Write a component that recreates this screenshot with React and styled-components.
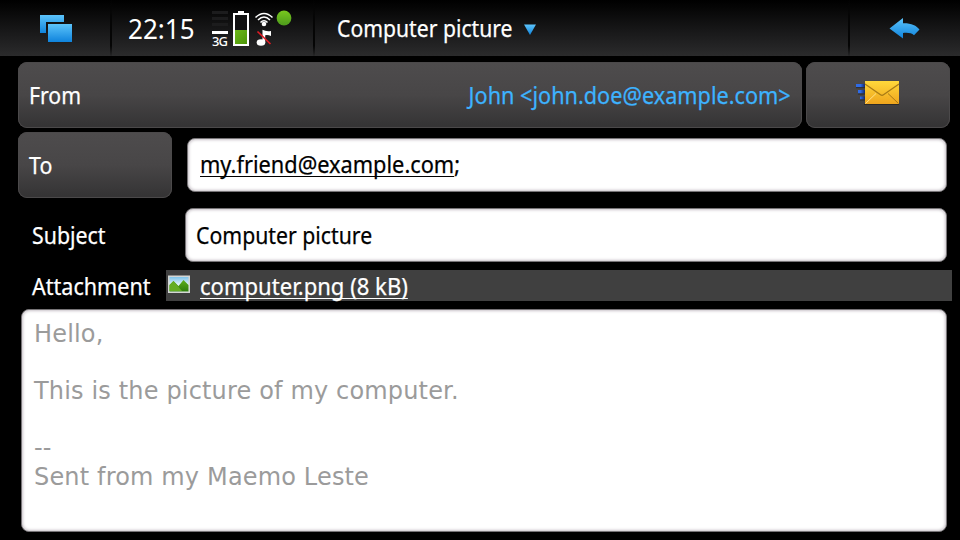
import React from 'react';
import styled, { createGlobalStyle } from 'styled-components';

const Global = createGlobalStyle`
  * { box-sizing: border-box; }
  body { margin: 0; background: #000; }
`;

const Screen = styled.div`
  width: 960px;
  height: 540px;
  overflow: hidden;
  background: #000;
  color: #fff;
  font-family: "Noto Sans", "Open Sans", sans-serif;
  font-size: 24px;
  line-height: 32px;
`;

const StatusBar = styled.header`
  display: flex;
  height: 56px;
  background: linear-gradient(#000 0%, #060606 15%, #19191a 58%, #2b2b2c 100%);
`;

const Segment = styled.div`
  display: flex;
  flex: ${(p) => (p.$width ? `0 0 ${p.$width}px` : '1')};
  height: 56px;
  padding-left: ${(p) => p.$pad}px;
  border-right: ${(p) => (p.$last ? '0' : '2px solid')};
  border-image: linear-gradient(transparent, #050505 30%, #050505 80%, transparent) 1;
`;

const Text = styled.span`
  display: block;
  flex: none;
  width: max-content;
  white-space: pre;
  color: ${(p) => p.$color || 'inherit'};
  -webkit-text-stroke: 0.25px currentColor;
  transform: scaleX(${(p) => p.$k || 1});
  transform-origin: ${(p) => p.$origin || 'left'} center;
`;

const Link = styled.span`
  text-decoration: underline;
  text-decoration-thickness: 1px;
  text-underline-offset: 3px;
  text-decoration-skip-ink: none;
`;

const Title = styled(Text)`
  width: 175px;
  margin-top: 12px;
`;

const Clock = styled(Text)`
  width: 66px;
  margin-top: 13px;
  font-size: 27px;
  -webkit-text-stroke: 0;
`;

const FileName = styled(Text)`
  margin-left: 9px;
`;

const Icon = styled.svg`
  display: block;
  flex: none;
  margin-top: ${(p) => p.$top || 0}px;
  margin-left: ${(p) => p.$left || 0}px;
`;

const StatusIcons = styled.div`
  display: flex;
  margin-left: auto;
  width: 102px;
`;

const Form = styled.main`
  display: flex;
  flex-direction: column;
  padding: 6px 8px 0 18px;
`;

const Row = styled.div`
  display: flex;
  height: ${(p) => p.$height}px;
  margin-bottom: ${(p) => p.$gap}px;
`;

const Button = styled.div`
  display: flex;
  justify-content: space-between;
  width: ${(p) => p.$width}px;
  height: 66px;
  margin-right: ${(p) => p.$gap || 0}px;
  padding: 17px 11px 0;
  border-radius: 9px;
  background: linear-gradient(#4e4c4d, #484647 50%, #353435 96%);
  box-shadow: inset 0 0 0 1px #4b494a;
`;

const Label = styled.div`
  flex: none;
  width: ${(p) => p.$width}px;
  padding: ${(p) => p.$top}px 0 0 14px;
`;

const Field = styled.div`
  width: ${(p) => p.$width}px;
  height: 54px;
  margin-top: ${(p) => p.$top || 0}px;
  padding: ${(p) => p.$padTop}px 0 0 ${(p) => p.$pad}px;
  border: 1px solid #777477;
  border-radius: 8px;
  background: #fff;
  color: #000;
  box-shadow: inset 0 0 3px 1px #c8c2c8;
`;

const AttachmentBar = styled.div`
  display: flex;
  width: 786px;
  flex: none;
  background: #404040;
`;

const Body = styled.div`
  width: 926px;
  height: 223px;
  margin-left: 3px;
  padding: 10px 12px;
  border: 1px solid #777477;
  border-radius: 8px;
  background: #fff;
  color: #9b9b9b;
  font-family: "DejaVu Sans", sans-serif;
  font-size: 24px;
  letter-spacing: 0.16px;
  line-height: 28.5px;
  white-space: pre-line;
  box-shadow: inset 0 0 3px 1px #c8c2c8;
`;

const BlueGradient = ({ id }) => (
  <linearGradient id={id} x1="0" y1="0" x2="0" y2="1">
    <stop offset="0" stopColor="#5cc4fb" />
    <stop offset="1" stopColor="#0f83dc" />
  </linearGradient>
);

const WindowsIcon = () => (
  <Icon width="34" height="29" $top={14} $left={39}>
    <defs><BlueGradient id="win" /></defs>
    <path d="M1 1h24v7H7v11H1z" fill="url(#win)" />
    <path d="M9 10h24v18H9z" fill="url(#win)" />
  </Icon>
);

const SignalIcon = () => (
  <Icon width="18" height="44" $top={8}>
    <g fill="#1c1c1d">
      <path d="M1 3h16v3H1zM1 9h16v3H1zM1 15h16v3H1z" />
    </g>
    <path d="M1 23h16v3H1z" fill="#fff" />
    <text x="1" y="38" fill="#fff" fontFamily="Noto Sans, sans-serif" fontSize="13" fontWeight="500" textLength="16" lengthAdjust="spacing">3G</text>
  </Icon>
);

const BatteryIcon = () => (
  <Icon width="18" height="37" $top={10} $left={3}>
    <defs>
      <linearGradient id="bat" x1="0" y1="0" x2="1" y2="1">
        <stop offset="0" stopColor="#6db81b" />
        <stop offset="1" stopColor="#4c9508" />
      </linearGradient>
    </defs>
    <path d="M6 1h6v2h5v33H1V3h5z" fill="#fff" />
    <path d="M3 5h12v29H3z" fill="#111" />
    <path d="M3 20h12v14H3z" fill="url(#bat)" />
  </Icon>
);

const WifiMusicIcon = () => (
  <Icon width="20" height="36" $top={11} $left={4}>
    <g fill="none" stroke="#fff" strokeWidth="1.600">
      <path d="M1.500 6.500Q10 -1.500 18.500 6.500M4 9Q10 3 16 9M6.500 11.500Q10 8 13.500 11.500" />
    </g>
    <circle cx="10" cy="13" r="2.300" fill="#fff" />
    <path d="M8.500 18.800q3.500 2 8.500 1.200v5q-3-1.400-5.800-.8V31.500H8.500z" fill="#fff" />
    <ellipse cx="7" cy="31.500" rx="4.300" ry="3.300" fill="#fff" />
    <path d="M3.500 20.500l13 12.500" stroke="#e01b24" strokeWidth="1.700" />
  </Icon>
);

const OnlineIcon = () => (
  <Icon width="16" height="16" $top={10} $left={2}>
    <defs>
      <linearGradient id="dot" x1="0" y1="0" x2="0" y2="1">
        <stop offset="0" stopColor="#78c81e" />
        <stop offset="1" stopColor="#4d9b1c" />
      </linearGradient>
    </defs>
    <circle cx="8" cy="8" r="7.400" fill="url(#dot)" />
  </Icon>
);

const MenuArrow = () => (
  <Icon width="14" height="12" $top={24} $left={11}>
    <defs><BlueGradient id="tri" /></defs>
    <path d="M1 .5h12l-6 10.500z" fill="url(#tri)" />
  </Icon>
);

const BackIcon = () => (
  <Icon width="32" height="24" $top={17} $left={38}>
    <defs><BlueGradient id="back" /></defs>
    <path d="M1.500 11.500L15 1V6.200C23 6 28.500 8.500 31.500 12.500L26 18.200C23.500 16 20 15.500 15 16V21.500z" fill="url(#back)" />
  </Icon>
);

const SendIcon = () => (
  <Icon width="46" height="28" $top={0} $left={38}>
    <defs>
      <linearGradient id="env" x1="0" y1="0" x2="0" y2="1">
        <stop offset="0" stopColor="#ffd83b" />
        <stop offset="1" stopColor="#efa51d" />
      </linearGradient>
      <linearGradient id="dash" gradientUnits="userSpaceOnUse" x1="1" y1="0" x2="10" y2="0">
        <stop offset="0" stopColor="#2f6be6" />
        <stop offset=".5" stopColor="#2f6be6" />
        <stop offset="1" stopColor="#10276f" />
      </linearGradient>
    </defs>
    <path d="M9 25.500h35" stroke="#2b2a2b" strokeWidth="1" />
    <path d="M1 5h9v3.200H1zM3 11h7v3.500H3zM5 17.500h5v3H5z" fill="url(#dash)" />
    <path d="M1 8.700h9M3 15h7M5 21h5" stroke="#2b2a2b" />
    <path d="M10 2h34v23H10z" fill="url(#env)" />
    <path d="M10.500 24.500L21 14.500" stroke="#ffe28a" strokeWidth="1" />
    <path d="M43.500 24.500L33 14.500" stroke="#a77818" strokeWidth="1" />
    <path d="M10 5L25.500 15.800Q27 16.800 28.500 15.800L44 5" fill="none" stroke="#a87b16" strokeWidth="1.300" />
  </Icon>
);

const PictureIcon = () => (
  <Icon width="23" height="20" $top={5} $left={2}>
    <defs>
      <linearGradient id="sky" x1="0" y1="0" x2="0" y2="1">
        <stop offset="0" stopColor="#7fc4ea" />
        <stop offset=".6" stopColor="#eef8fc" />
      </linearGradient>
      <linearGradient id="hill" x1="0" y1="0" x2="0" y2="1">
        <stop offset="0" stopColor="#5eaf1c" />
        <stop offset="1" stopColor="#2f7d0c" />
      </linearGradient>
    </defs>
    <path d="M0 .500h22v17.500H0z" fill="#d4d6d4" />
    <path d="M1.500 2h19v14.500h-19z" fill="url(#sky)" />
    <path d="M1.500 10l4-4 5 5 5-6 5 5v6.500h-19z" fill="url(#hill)" />
    <path d="M1.500 10l4-4L14 16H1.500z" fill="#64ad22" />
  </Icon>
);

const message = `Hello,

This is the picture of my computer.

--
Sent from my Maemo Leste`;

export default function App() {
  return (
    <Screen>
      <Global />
      <StatusBar>
        <Segment $width={112} $pad={0}><WindowsIcon /></Segment>
        <Segment $width={203} $pad={16}>
          <Clock $k={0.965}>22:15</Clock>
          <StatusIcons>
            <SignalIcon />
            <BatteryIcon />
            <WifiMusicIcon />
            <OnlineIcon />
          </StatusIcons>
        </Segment>
        <Segment $pad={22}>
          <Title $k={0.882}>Computer picture</Title>
          <MenuArrow />
        </Segment>
        <Segment $width={110} $pad={0} $last><BackIcon /></Segment>
      </StatusBar>
      <Form>
        <Row $height={66} $gap={4}>
          <Button $width={784} $gap={4}>
            <Text $k={0.885}>From</Text>
            <Text $k={0.903} $color="#3db3ff" $origin="right">{'John <john.doe@example.com>'}</Text>
          </Button>
          <Button $width={144}><SendIcon /></Button>
        </Row>
        <Row $height={66} $gap={10}>
          <Button $width={154} $gap={15}><Text $k={0.89}>To</Text></Button>
          <Field $width={760} $top={6} $pad={12} $padTop={9}>
            <Text $k={0.907}><Link>my.friend@example.com</Link>;</Text>
          </Field>
        </Row>
        <Row $height={54} $gap={8}>
          <Label $width={167} $top={11}><Text $k={0.89}>Subject</Text></Label>
          <Field $width={762} $pad={10} $padTop={10}><Text $k={0.885}>Computer picture</Text></Field>
        </Row>
        <Row $height={31} $gap={8}>
          <Label $width={148} $top={0}><Text $k={0.898}>Attachment</Text></Label>
          <AttachmentBar>
            <PictureIcon />
            <FileName $k={0.919}><Link>computer.png (8 kB)</Link></FileName>
          </AttachmentBar>
        </Row>
        <Body>{message}</Body>
      </Form>
    </Screen>
  );
}
